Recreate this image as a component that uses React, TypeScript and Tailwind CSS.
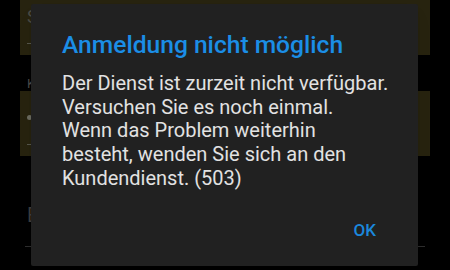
import React from 'react';

const font = { fontFamily: 'Roboto, "Noto Sans", sans-serif' };

const BODY_LINES = [
  'Der Dienst ist zurzeit nicht verfügbar.',
  'Versuchen Sie es noch einmal.',
  'Wenn das Problem weiterhin',
  'besteht, wenden Sie sich an den',
  'Kundendienst. (503)',
];

// Dimmed settings screen behind the dialog
const Backdrop: React.FC = () => (
  <div className="flex h-full w-full flex-col bg-black text-[#3a3a3a]">
    <div className="mx-[20px] flex h-[55px] flex-col bg-[#27230f] px-[7px] pt-[8px]">
      <span className="text-[18px] leading-[18px] text-[#4a4a44]">S</span>
      <div className="mt-[17px] h-px w-[10px] bg-[#55554a]" />
    </div>
    <div className="mx-[20px] mt-[23px] px-[7px] text-[13px] leading-[12px] text-[#4a4a48]">K</div>
    <div className="mx-[20px] mt-[1px] flex h-[65px] flex-col bg-[#27230f] px-[7px] pt-[24px]">
      <div className="h-[5px] w-[5px] rounded-full bg-[#6a6a5e]" />
      <div className="mt-[24px] h-px w-[10px] bg-[#55554a]" />
    </div>
    <div className="mx-[20px] mt-[49px] px-[7px] text-[20px] leading-[20px] text-[#3e3e3e]">E</div>
    <div className="mx-[25px] mt-[21px] h-px bg-[#2e2e2e]" />
  </div>
);

export default function App() {
  return (
    <div className="relative h-[270px] w-[450px] overflow-hidden bg-black" style={font}>
      <Backdrop />
      <div className="absolute left-[31px] top-[4px] flex h-[262px] w-[387px] flex-col rounded-[2px] bg-[#212121] shadow-lg">
        <h1 className="pl-[31px] pt-[26px] text-[24.6px] font-medium leading-[29px] text-[#1b8ee6]">
          Anmeldung nicht möglich
        </h1>
        <div className="mt-[13px] pl-[31px] text-[20px] leading-[23.7px] text-[#e2e2e2]">
          {BODY_LINES.map((line) => (
            <div key={line}>{line}</div>
          ))}
        </div>
        <div className="mt-auto flex justify-end pb-[26px] pr-[42px]">
          <button className="text-[17px] font-medium leading-[20px] text-[#1b87dc]">OK</button>
        </div>
      </div>
    </div>
  );
}
